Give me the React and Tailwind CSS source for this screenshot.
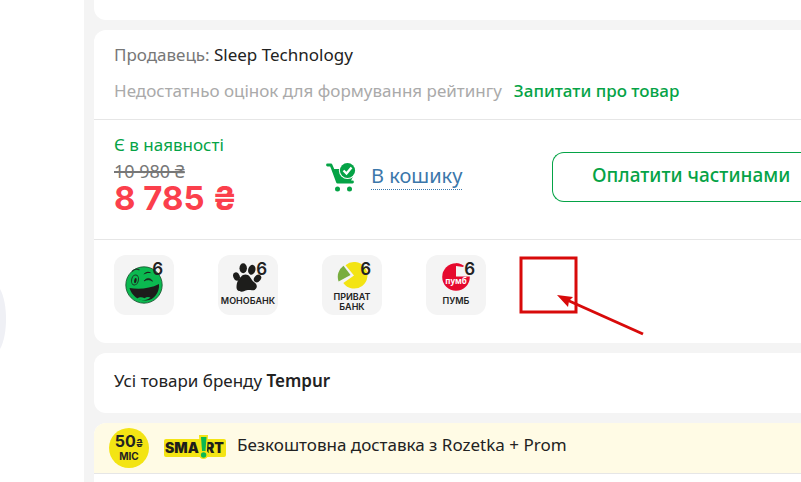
import React from 'react';

const SmileIcon = () => (
  <svg viewBox="0 -3 40 46" className="h-[46px] w-10" aria-hidden="true">
    <circle cx="20" cy="20" r="18.2" fill="#0bb950" stroke="#174d2b" strokeWidth="0.8" />
    <ellipse cx="11" cy="15" rx="3.4" ry="5" fill="none" stroke="#1a3d27" strokeWidth="1" transform="rotate(12 11 15)" />
    <ellipse cx="11.4" cy="15.6" rx="1.2" ry="2.6" fill="#1d1d1b" transform="rotate(12 11.4 15.6)" />
    <path d="M8 6.5c2-2.2 5-3 7.500-1.500" fill="none" stroke="#1a3d27" strokeWidth="1.200" />
    <path d="M19.500 9.500c2-2.800 5-3.600 8-1.300-3-.6-5.500-.2-8 1.300z" fill="#1d1d1b" />
    <path d="M20 16c2.500-3.500 6.500-3.500 8.500.3-2.500-2-5.500-2-8.500-.3z" fill="#1d1d1b" stroke="#1d1d1b" strokeWidth="0.600" />
    <path d="M5.500 23c9 1.500 20.500.8 29.500-4 .8 8.500-5 16-12.500 16.500C14.500 36 7.500 30.500 5.500 23z" fill="#1d1d1b" />
    <path d="M13 33.500c3-1.800 5.500-1.200 7.500-.3 2-1.500 4-1.700 6-.7-4 3.500-9.500 3.300-13.500 1z" fill="#0bb950" />
  </svg>
);

const PawIcon = () => (
  <svg viewBox="0 -1 32 32" className="h-8 w-8" aria-hidden="true">
    <g fill="#1d1d1b">
      <ellipse cx="4.500" cy="13.500" rx="3.200" ry="4.200" transform="rotate(-22 4.500 13.500)" />
      <ellipse cx="11.200" cy="5.200" rx="3.700" ry="5" />
      <ellipse cx="19.800" cy="6.800" rx="3.600" ry="5" transform="rotate(15 19.800 6.800)" />
      <ellipse cx="25.500" cy="15.500" rx="3.200" ry="4.200" transform="rotate(40 25.500 15.500)" />
      <path d="M6 17.500c2.500-3 3.800-6 7.500-6s4.700 3 6.500 5.500c1.700 2.500 5 3.500 4.800 6.500-.2 2.500-2.300 4-4.800 3.700-3-.4-5-.5-7.500.8-3.500 1.600-8 .2-8-3.800 0-2.800.5-4.700 1.500-6.700z" />
    </g>
  </svg>
);

const PrivatIcon = () => (
  <svg viewBox="0 0 32 28" className="h-7 w-8" aria-hidden="true">
    <path d="M18 13.500 9.500 3.200A13.300 13.300 0 1 1 7.300 21z" fill="#f3e414" />
    <path d="M14.500 13 7.500 3.800A13.500 13.500 0 0 0 2.600 19.500z" fill="#78ad3e" />
  </svg>
);

const PumbIcon = () => (
  <svg viewBox="0 -1 28 32" className="h-8 w-7" aria-hidden="true">
    <circle cx="14" cy="14" r="13.800" fill="#e60a2e" />
    <path d="M14 1.500h14v12H14z" fill="#f4f4f4" />
    <path d="M14 .2a13.800 13.800 0 0 1 8 2.500l-1 1.300-7-1z" fill="#e60a2e" />
    <text x="14" y="21" fill="#fff" fontSize="8" fontWeight="700" textAnchor="middle" fontFamily="Open Sans, sans-serif">пумб</text>
  </svg>
);

const CartIcon = () => (
  <svg viewBox="0 0 30 30" className="h-[30px] w-[30px]" aria-hidden="true">
    <path d="M1.500 3h3.500l1.500 3.500 5 13.500h15" fill="none" stroke="#05a346" strokeWidth="2.800" strokeLinejoin="round" strokeLinecap="round" />
    <path d="M6 7h9l13 5-3.500 8H11z" fill="#05a346" />
    <circle cx="21.500" cy="8.500" r="8.600" fill="#fff" />
    <circle cx="21.500" cy="8.500" r="7.600" fill="#05a346" />
    <path d="m17.500 8.500 3 3 5-6" fill="none" stroke="#fff" strokeWidth="2.300" />
    <circle cx="11.500" cy="27" r="2.500" fill="#05a346" />
    <circle cx="23.500" cy="27" r="2.500" fill="#05a346" />
  </svg>
);

const SmartLogo = () => (
  <svg viewBox="0 0 62 26" className="h-[26px] w-[62px]" role="img" aria-label="Smart">
    <rect y="4" width="62" height="18" rx="2" fill="#f3e414" />
    <g fill="#1d1d1b" fontFamily="Inter, sans-serif" fontSize="14" fontWeight="900">
      <text x="1" y="18">SMA</text>
      <text x="41" y="18">RT</text>
    </g>
    <path d="M35 0h9l-1 16a4.800 4.800 0 1 1-7 0z" fill="#f3e414" />
    <path d="M37 2h5.500l-1 14h-3.500z" fill="#0bb950" />
    <circle cx="39.600" cy="20" r="2.700" fill="#0bb950" />
  </svg>
);

const Annotation = () => (
  <svg viewBox="0 0 126 82" className="absolute -top-px left-[405px] h-[82px] w-[126px]" fill="none" stroke="#d80a0a" aria-hidden="true">
    <rect x="2" y="4" width="55" height="54" strokeWidth="3" />
    <path d="M124 80 48 46" strokeWidth="3" />
    <path d="m38 41 16 2-4 4-1 6z" fill="#d80a0a" stroke="none" />
  </svg>
);

const payments = [
  { id: 'smile', icon: <SmileIcon />, label: '' },
  { id: 'mono', icon: <PawIcon />, label: 'МОНОБАНК' },
  { id: 'privat', icon: <PrivatIcon />, label: 'ПРИВАТ БАНК' },
  { id: 'pumb', icon: <PumbIcon />, label: 'ПУМБ' },
];

const PaymentTile = ({ icon, label }) => (
  <li className="relative flex h-15 w-15 shrink-0 flex-col items-center rounded-xl bg-[#f4f4f4] pt-[7px]">
    {icon}
    {label && (
      <span className="mt-0.5 text-center font-['Inter',sans-serif] text-[9px] leading-[10px] font-semibold">{label}</span>
    )}
    <span className="absolute top-1 right-[11px] font-['Inter',sans-serif] text-[17px] leading-5 font-semibold">6</span>
  </li>
);

const App = () => {
  return (
    <div className="flex min-h-screen overflow-hidden bg-[#f4f4f4] font-['Noto_Sans',sans-serif] text-[17px] leading-6 text-[#222]">
      <aside className="w-[84px] shrink-0 bg-white pt-[284px]">
        <svg viewBox="0 0 8 72" className="h-[72px] w-2" aria-hidden="true">
          <path d="M0 5c8 14 8 46 0 60z" fill="#eff0f5" />
        </svg>
      </aside>

      <main className="flex min-w-0 flex-1 flex-col gap-2.5 pl-2.5">
        <div className="h-5 rounded-bl-xl bg-white" />

        <section className="rounded-l-xl bg-white">
          <div className="space-y-3 border-b border-[#e6e6e6] px-5 pt-[13px] pb-4 whitespace-nowrap">
            <p>
              <span className="text-[#777]">Продавець:</span> Sleep Technology
            </p>
            <div className="flex gap-3">
              <span className="text-[#aaa]">Недостатньо оцінок для формування рейтингу</span>
              <a href="#ask" className="font-medium text-[#05a346]">Запитати про товар</a>
            </div>
          </div>

          <div className="flex border-b border-[#e6e6e6] pt-[13px] pb-6 pl-5 whitespace-nowrap">
            <div className="w-[212px] shrink-0">
              <p className="text-[#05a346]">Є в наявності</p>
              <p className="pt-1 text-lg leading-5 text-[#777]">
                <s className="decoration-2">10 980 ₴</s>
              </p>
              <p className="font-['Inter',sans-serif] text-[33px] leading-[34px] font-bold text-[#fb3f4c]">8 785 ₴</p>
            </div>
            <div className="w-[226px] shrink-0 pt-[29px]">
              <button type="button" className="flex items-start gap-[15px] text-xl text-[#3b77aa]">
                <CartIcon />
                <span className="border-b border-dotted border-[#3b77aa] leading-[27px]">В кошику</span>
              </button>
            </div>
            <div className="min-w-0 flex-1 pt-[19px]">
              <button type="button" className="h-[50px] w-full rounded-l-xl border border-r-0 border-[#05a346] pb-1 pl-[39px] text-left text-[19px] font-medium text-[#05a346]">
                Оплатити частинами
              </button>
            </div>
          </div>

          <div className="px-5 pt-[15px] pb-7">
            <div className="relative">
              <ul className="flex gap-11">
                {payments.map((p) => (
                  <PaymentTile key={p.id} icon={p.icon} label={p.label} />
                ))}
              </ul>
              <Annotation />
            </div>
          </div>
        </section>

        <section className="rounded-l-xl bg-white px-5 pt-4 pb-5">
          <a href="#brand">
            Усі товари бренду <b className="font-semibold">Tempur</b>
          </a>
        </section>

        <section className="flex-1 rounded-tl-xl bg-white">
          <div className="flex items-center gap-[15px] rounded-tl-xl border-b border-[#e6e6e6] bg-[#fffbe5] py-[5px] pl-[15px] whitespace-nowrap">
            <div className="flex h-10 w-10 shrink-0 flex-col items-center justify-center rounded-full bg-[#f3e414] font-['Inter',sans-serif] font-bold">
              <span className="text-base leading-[14px]">
                50<span className="text-[10px]">₴</span>
              </span>
              <span className="text-[10px] leading-3">МІС</span>
            </div>
            <SmartLogo />
            <span className="-ml-1 pb-1.5">Безкоштовна доставка з Rozetka + Prom</span>
          </div>
        </section>
      </main>
    </div>
  );
};

export default App;
